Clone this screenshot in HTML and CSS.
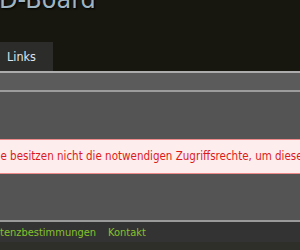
FILE: index.html
```html
<!DOCTYPE html>
<html lang="de">
<head>
  <meta charset="UTF-8" />
  <title>D-Board</title>
  <link rel="stylesheet" href="styles.css">
</head>
<body>
  <!-- Kopfbereich -->
  <div class="header">
    <h1 class="title">D-Board</h1>
    <ul class="nav">
      <li class="tab">Links</li>
    </ul>
  </div>

  <div class="subbar"></div>

  <div class="content">
    <div class="error">Sie besitzen nicht die notwendigen Zugriffsrechte, um diese Seite aufzurufen.</div>
  </div>

  <div class="footer">
    <a href="#">tenzbestimmungen</a>
    <a href="#">Kontakt</a>
  </div>
  <div class="footer-bottom"></div>
</body>
</html>
```

FILE: styles.css
```css
body {
  margin: 0;
  background: #545454;
  font-family: 'DejaVu Sans Condensed', 'DejaVu Sans', sans-serif;
  overflow: hidden;
}

/* Header */
.header {
  background: #17170f;
  height: 71px;
  display: flex;
  flex-direction: column;
  justify-content: space-between;
  overflow: hidden;
}

.title {
  margin: -12px 0 0 -1px;
  font-family: 'DejaVu Sans', sans-serif;
  font-weight: normal;
  font-size: 24px;
  line-height: 24px;
  color: #9fb4c3;
  text-shadow: 1px 1px 2px #000;
}

.nav {
  list-style: none;
  margin: 0;
  padding: 0;
  display: flex;
}

.tab {
  width: 53px;
  height: 29px;
  line-height: 29px;
  box-sizing: border-box;
  padding-left: 7px;
  background: #2c2c2a;
  color: #dfe6ee;
  font-size: 12.5px;
}

.subbar {
  height: 17px;
  background: #5b5b5b;
  border-top: 2px solid #acacac;
  border-bottom: 2px solid #9c9c9c;
}

.content {
  height: 128px;
  padding-top: 47px;
  box-sizing: border-box;
}

.error {
  margin-left: -16px;
  width: 360px;
  height: 35px;
  box-sizing: border-box;
  border: 1px solid #ee8a8a;
  background: #fdeded;
  color: #dd1a1a;
  font-size: 11.5px;
  line-height: 33px;
  padding-left: 6px;
  white-space: nowrap;
}

/* Footer */
.footer {
  height: 20px;
  background: #333333;
  border-top: 2px solid #9a9a9a;
  display: flex;
  gap: 12px;
  align-items: center;
}

.footer a {
  color: #86c22c;
  text-decoration: none;
  font-size: 11px;
}

.footer-bottom {
  height: 20px;
  background: #2f2f2a;
}
```
